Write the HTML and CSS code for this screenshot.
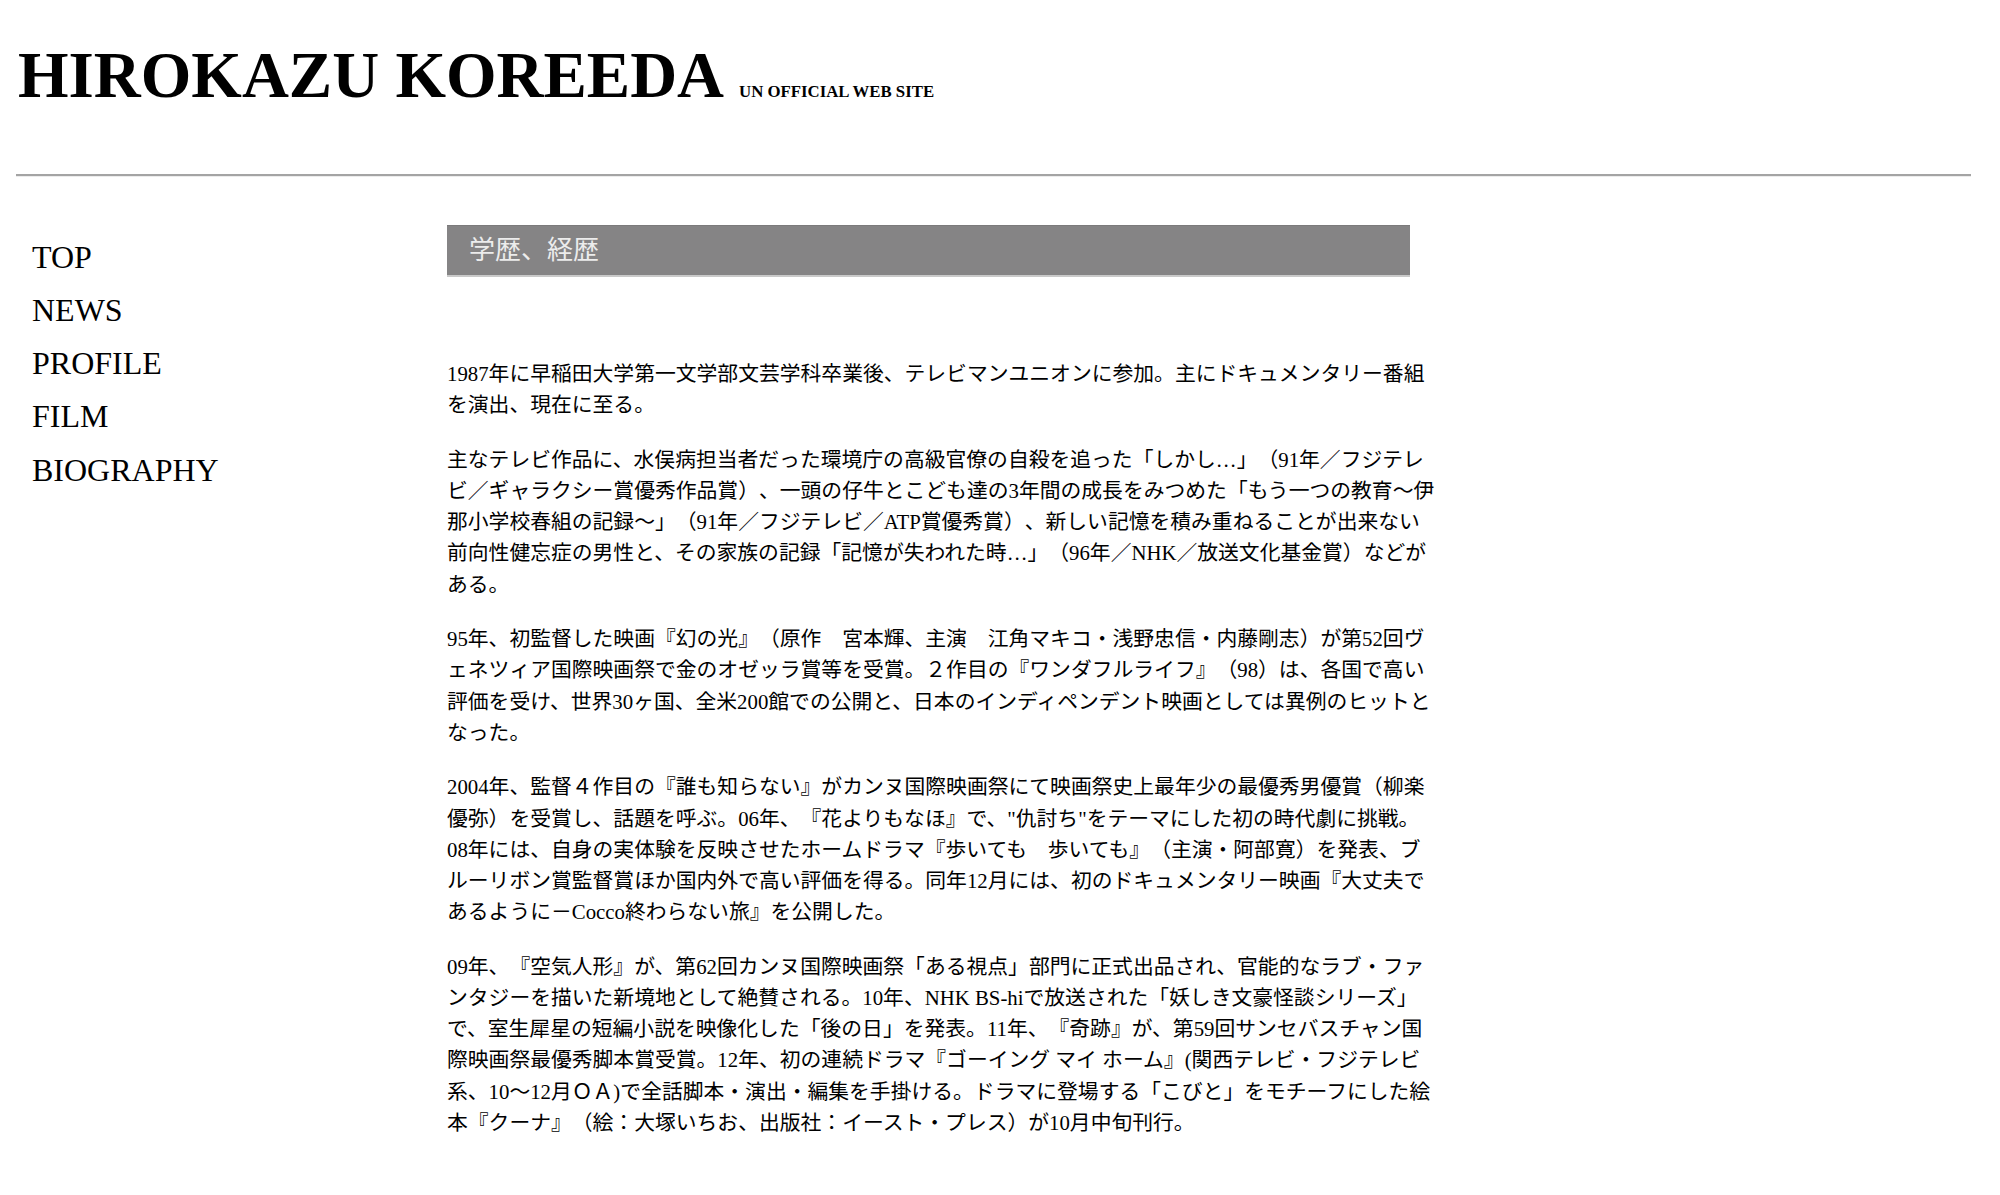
FILE: index.html
```html
<!DOCTYPE html>
<html lang="ja">
<head>
<meta charset="utf-8">
<title>HIROKAZU KOREEDA UN OFFICIAL WEB SITE</title>
<link rel="stylesheet" href="styles.css">
</head>
<body>
<div class="page">
  <header class="site-header">
    <h1 class="site-title">HIROKAZU KOREEDA<span class="site-sub">UN OFFICIAL WEB SITE</span></h1>
  </header>
  <hr class="rule">
  <div class="main">
    <nav class="nav">
      <ul>
        <li><a href="#">TOP</a></li>
        <li><a href="#">NEWS</a></li>
        <li><a href="#">PROFILE</a></li>
        <li><a href="#">FILM</a></li>
        <li><a href="#">BIOGRAPHY</a></li>
      </ul>
    </nav>
    <main class="content">
      <h2 class="section-title">学歴、経歴</h2>
      <p>1987年に早稲田大学第一文学部文芸学科卒業後、テレビマンユニオンに参加。主にドキュメンタリー番組を演出、現在に至る。</p>
      <p>主なテレビ作品に、水俣病担当者だった環境庁の高級官僚の自殺を追った「しかし…」（91年／フジテレビ／ギャラクシー賞優秀作品賞）、一頭の仔牛とこども達の3年間の成長をみつめた「もう一つの教育〜伊那小学校春組の記録〜」（91年／フジテレビ／ATP賞優秀賞）、新しい記憶を積み重ねることが出来ない前向性健忘症の男性と、その家族の記録「記憶が失われた時…」（96年／NHK／放送文化基金賞）などがある。</p>
      <p>95年、初監督した映画『幻の光』（原作　宮本輝、主演　江角マキコ・浅野忠信・内藤剛志）が第52回ヴェネツィア国際映画祭で金のオゼッラ賞等を受賞。２作目の『ワンダフルライフ』（98）は、各国で高い評価を受け、世界30ヶ国、全米200館での公開と、日本のインディペンデント映画としては異例のヒットとなった。</p>
      <p>2004年、監督４作目の『誰も知らない』がカンヌ国際映画祭にて映画祭史上最年少の最優秀男優賞（柳楽優弥）を受賞し、話題を呼ぶ。06年、『花よりもなほ』で、"仇討ち"をテーマにした初の時代劇に挑戦。08年には、自身の実体験を反映させたホームドラマ『歩いても　歩いても』（主演・阿部寛）を発表、ブルーリボン賞監督賞ほか国内外で高い評価を得る。同年12月には、初のドキュメンタリー映画『大丈夫であるように－Cocco終わらない旅』を公開した。</p>
      <p>09年、『空気人形』が、第62回カンヌ国際映画祭「ある視点」部門に正式出品され、官能的なラブ・ファンタジーを描いた新境地として絶賛される。10年、NHK BS-hiで放送された「妖しき文豪怪談シリーズ」で、室生犀星の短編小説を映像化した「後の日」を発表。11年、『奇跡』が、第59回サンセバスチャン国際映画祭最優秀脚本賞受賞。12年、初の連続ドラマ『ゴーイング マイ ホーム』(関西テレビ・フジテレビ系、10〜12月ＯＡ)で全話脚本・演出・編集を手掛ける。ドラマに登場する「こびと」をモチーフにした絵本『クーナ』（絵：大塚いちお、出版社：イースト・プレス）が10月中旬刊行。</p>
    </main>
  </div>
</div>
</body>
</html>
```
FILE: styles.css
```css
html, body {
  margin: 0;
  padding: 0;
  background: #ffffff;
}

body {
  color: #000000;
  font-family: "Liberation Serif", "Noto Sans CJK JP", serif;
}

.page {
  padding: 0 29px 40px 16px;
}

.site-header {
  padding: 43px 0 0 2px;
}

.site-title {
  margin: 0;
  font-size: 65px;
  line-height: 64px;
  font-weight: bold;
  white-space: nowrap;
}

.site-sub {
  font-size: 16.8px;
  line-height: 1;
  margin-left: 15px;
}

.rule {
  margin: 67px 0 0;
  height: 0;
  border: 0;
  border-top: 2px solid #a4a4a4;
  border-bottom: 1px solid #ececec;
}

.main {
  display: flex;
  align-items: flex-start;
  margin-top: 48px;
}

.nav {
  flex: none;
  width: 431px;
  box-sizing: border-box;
  padding: 5.6px 0 0 16px;
}

.nav ul {
  list-style: none;
  margin: 0;
  padding: 0;
}

.nav a {
  display: block;
  font-size: 32px;
  line-height: 53.25px;
  color: #000000;
  text-decoration: none;
}

.content {
  flex: none;
  width: 990px;
}

.section-title {
  width: 963px;
  box-sizing: border-box;
  margin: 0 0 81px;
  padding: 0 0 5px 22px;
  background: #858485;
  border-top: 1px solid #7b7a7b;
  border-bottom: 2px solid #c9c9c9;
  color: #ececec;
  font-family: "Noto Sans CJK JP", sans-serif;
  font-size: 26px;
  font-weight: normal;
  line-height: 44px;
}

.content p {
  margin: 0 0 23.4px;
  font-size: 20.8px;
  line-height: 31.2px;
  line-break: normal;
  text-spacing-trim: space-all;
  font-weight: 400;
}
```
